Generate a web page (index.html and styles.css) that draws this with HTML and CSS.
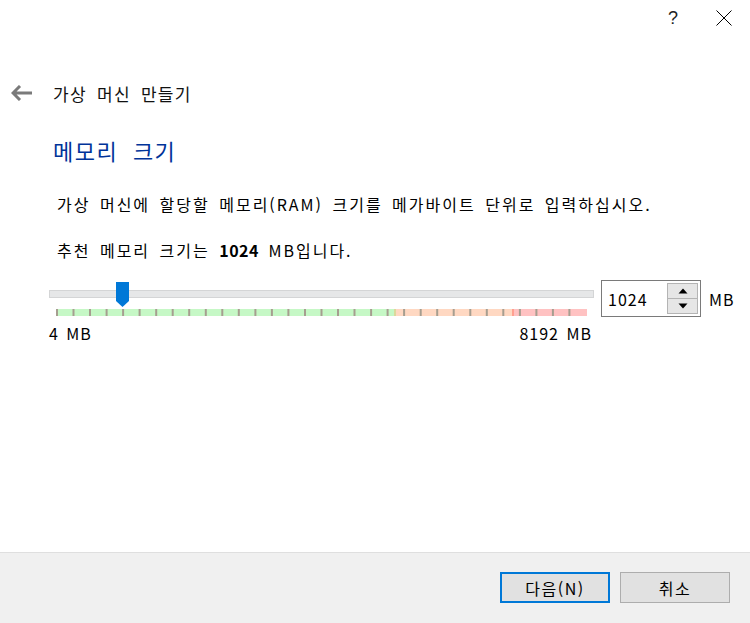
FILE: index.html
```html
<!DOCTYPE html>
<html lang="ko">
<head>
<meta charset="utf-8">
<title>가상 머신 만들기</title>
<link rel="stylesheet" href="styles.css">
</head>
<body>
<div class="window">
  <div class="titlebar">
    <span class="tb-help">?</span>
    <svg class="tb-close" width="16" height="16" viewBox="0 0 16 16"><path d="M0.5 0.5 L15.5 15.5 M15.5 0.5 L0.5 15.5" stroke="#000" stroke-width="1" fill="none"/></svg>
  </div>
  <div class="header">
    <svg class="back" width="22" height="16" viewBox="0 0 22 16"><path d="M2 8 H21 M9 1 L2 8 L9 15" stroke="#7a7a7a" stroke-width="3" fill="none"/></svg>
    <span class="wiz-title">가상 머신 만들기</span>
  </div>
  <div class="content">
    <h1 class="page-title">메모리 크기</h1>
    <p class="desc">가상 머신에 할당할 메모리(RAM) 크기를 메가바이트 단위로 입력하십시오.</p>
    <p class="desc rec">추천 메모리 크기는 <b>1024</b> MB입니다.</p>
    <div class="mem-row">
      <div class="slider">
        <div class="track">
          <svg class="thumb" width="13" height="25" viewBox="0 0 13 25"><polygon points="0,0 13,0 13,19 6.5,25 0,19" fill="#0078d7"/></svg>
        </div>
        <svg class="scale" width="532" height="7" viewBox="0 0 532 7">
          <rect x="0" y="0" width="339" height="7" fill="#c6f8c6"/>
          <rect x="339" y="0" width="118" height="7" fill="#ffd8c2"/>
          <rect x="457" y="0" width="74" height="7" fill="#ffc2c2"/>
          <rect x="338" y="0" width="2" height="7" fill="#dcd89c"/>
          <rect x="456" y="0" width="2" height="7" fill="#ffa090"/>
          <path fill="#a69e90" d="M0 0h2v7h-2z M16.5 0h2v7h-2z M33 0h2v7h-2z M49.6 0h2v7h-2z M66.1 0h2v7h-2z M82.6 0h2v7h-2z M99.2 0h2v7h-2z M115.7 0h2v7h-2z M132.2 0h2v7h-2z M148.8 0h2v7h-2z M165.3 0h2v7h-2z M181.8 0h2v7h-2z M198.4 0h2v7h-2z M214.9 0h2v7h-2z M231.4 0h2v7h-2z M248 0h2v7h-2z M264.5 0h2v7h-2z M281 0h2v7h-2z M297.5 0h2v7h-2z M314.1 0h2v7h-2z M330.6 0h2v7h-2z M347.1 0h2v7h-2z M363.7 0h2v7h-2z M380.2 0h2v7h-2z M396.7 0h2v7h-2z M413.3 0h2v7h-2z M429.8 0h2v7h-2z M446.3 0h2v7h-2z M462.9 0h2v7h-2z M479.4 0h2v7h-2z M495.9 0h2v7h-2z M512.4 0h2v7h-2z"/>
        </svg>
        <div class="limits"><span>4 MB</span><span>8192 MB</span></div>
      </div>
      <div class="spinbox">
        <span class="spin-value">1024</span>
        <div class="spin-btns">
          <div class="spin-btn"><svg width="10" height="6" viewBox="0 0 10 6"><polygon points="5,0.5 9.5,5.5 0.5,5.5" fill="#000"/></svg></div>
          <div class="spin-btn"><svg width="10" height="6" viewBox="0 0 10 6"><polygon points="0.5,0.5 9.5,0.5 5,5.5" fill="#000"/></svg></div>
        </div>
      </div>
      <span class="unit">MB</span>
    </div>
  </div>
  <div class="footer">
    <button class="btn btn-default">다음(N)</button>
    <button class="btn">취소</button>
  </div>
</div>
</body>
</html>
```
FILE: styles.css
```css
* { box-sizing: border-box; }
html, body { margin: 0; padding: 0; background: #fff; }
body {
  font-family: "Noto Sans CJK KR", "Noto Sans", sans-serif;
  color: #000;
  width: 750px;
  height: 623px;
  overflow: hidden;
}
.window {
  width: 750px;
  height: 623px;
  display: flex;
  flex-direction: column;
}
.titlebar {
  height: 36px;
  display: flex;
  align-items: center;
  justify-content: flex-end;
  padding-right: 18px;
  gap: 38px;
}
.tb-help {
  font-family: "Liberation Sans", sans-serif;
  font-size: 18px;
  font-weight: 300;
  color: #222;
  margin-top: 0px;
}
.tb-close { display: block; margin-top: -1px; }
.header {
  display: flex;
  align-items: center;
  height: 44px;
  margin-top: 35px;
  padding-left: 11px;
}
.back { display: block; margin-right: 20px; }
.wiz-title {
  font-size: 17px;
  letter-spacing: 1.3px;
  word-spacing: 4px;
  color: #111;
}
.content {
  padding-left: 53px;
  flex: 1;
}
.page-title {
  margin: 19px 0 0 0;
  font-size: 22px;
  font-weight: normal;
  color: #003399;
  letter-spacing: 1.5px;
  word-spacing: 7px;
  line-height: 32px;
}
.desc {
  margin: 26px 0 0 4px;
  font-size: 16px;
  line-height: 24px;
  letter-spacing: 2px;
  word-spacing: 3px;
}
.desc.rec { margin-top: 22px; }
.desc b { font-weight: bold; letter-spacing: 0.5px; }
.mem-row {
  display: flex;
  align-items: flex-start;
  margin-top: 19px;
  margin-left: -4px;
}
.slider {
  width: 545px;
  margin-top: 9px;
}
.track {
  position: relative;
  height: 8px;
  background: #e6e7e8;
  border: 1px solid #d4d5d6;
}
.thumb {
  position: absolute;
  left: 66px;
  top: -9px;
  display: block;
}
.scale {
  display: block;
  margin: 11px 0 0 7px;
}
.limits {
  display: flex;
  justify-content: space-between;
  font-size: 16px;
  letter-spacing: 1px;
  margin-top: 7px;
  padding-right: 2px;
  word-spacing: 2px;
  line-height: 20px;
}
.spinbox {
  margin-left: 7px;
  margin-top: -1px;
  width: 100px;
  height: 37px;
  border: 1px solid #7a7a7a;
  display: flex;
  align-items: center;
  justify-content: space-between;
  padding: 2px 2px 2px 6px;
}
.spin-value { font-size: 16px; letter-spacing: 1px; }
.spin-btns {
  display: flex;
  flex-direction: column;
  width: 31px;
  height: 31px;
  border: 1px solid #b4b4b4;
  background: #e6e6e6;
}
.spin-btn {
  flex: 1;
  display: flex;
  align-items: center;
  justify-content: center;
}
.spin-btn + .spin-btn { border-top: 1px solid #b4b4b4; }
.spin-btn svg { display: block; }
.unit {
  font-size: 16px;
  letter-spacing: 1px;
  margin-left: 8px;
  line-height: 37px;
}
.footer {
  height: 71px;
  background: #f0f0f0;
  border-top: 1px solid #dfdfdf;
  display: flex;
  justify-content: flex-end;
  align-items: flex-start;
  padding: 19px 20px 0 0;
  gap: 10px;
}
.btn {
  width: 110px;
  height: 31px;
  font-family: "Noto Sans CJK KR", sans-serif;
  font-size: 16px;
  letter-spacing: 1.5px;
  background: #e1e1e1;
  border: 1px solid #adadad;
  color: #000;
  padding: 0;
  margin: 0;
}
.btn-default { border: 2px solid #0078d7; }
```
